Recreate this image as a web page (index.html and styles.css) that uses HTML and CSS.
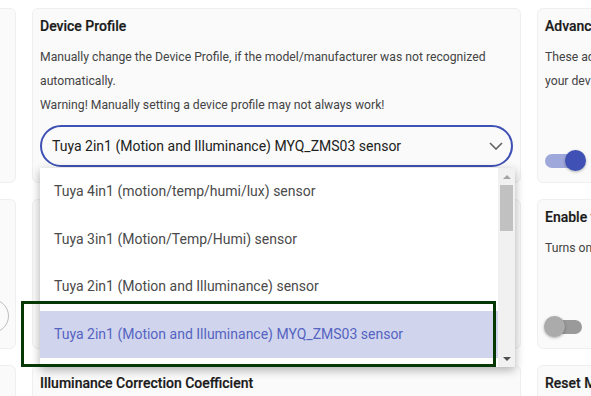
FILE: index.html
```html
<!DOCTYPE html>
<html lang="en">
<head>
  <meta charset="UTF-8">
  <title>Device Settings</title>
  <link rel="stylesheet" href="styles.css">
</head>
<body>

  <div class="grid">

    <div class="card">
      <h3 class="titulo">Device Information</h3>
      <p class="texto">Model and manufacturer reported by the device.</p>
    </div>

    <div class="card">
      <h3 class="titulo">Device Profile</h3>
      <p class="texto">Manually change the Device Profile, if the model/manufacturer was not recognized automatically.</p>
      <p class="texto">Warning! Manually setting a device profile may not always work!</p>

      <div class="selector">
        <div class="select">
          <span>Tuya 2in1 (Motion and Illuminance) MYQ_ZMS03 sensor</span>
          <svg class="chevron" width="14" height="8" viewBox="0 0 14 8">
            <path d="M1 1 L7 7 L13 1" fill="none" stroke="#616161" stroke-width="1.6"/>
          </svg>
        </div>

        <div class="lista">
          <div class="opciones">
            <div class="opcion">Tuya 4in1 (motion/temp/humi/lux) sensor</div>
            <div class="opcion">Tuya 3in1 (Motion/Temp/Humi) sensor</div>
            <div class="opcion">Tuya 2in1 (Motion and Illuminance) sensor</div>
            <div class="opcion activa">Tuya 2in1 (Motion and Illuminance) MYQ_ZMS03 sensor</div>
            <div class="opcion">Tuya Human Presence sensor ZG-204ZL</div>
          </div>
          <div class="scroll">
            <div class="flecha arriba"></div>
            <div class="pista"><div class="barra"></div></div>
            <div class="flecha abajo"></div>
          </div>
          <div class="marco"></div>
        </div>
      </div>
    </div>

    <div class="card">
      <h3 class="titulo">Advanced Options</h3>
      <p class="texto">These advanced options are intended for experienced users and may change how<br>your device behaves.</p>
      <div class="toggle on"><div class="pista-t"></div><div class="bola"></div></div>
    </div>

    <div class="card">
      <h3 class="titulo">Identify Device</h3>
      <p class="texto">Makes the device blink so it can be found.</p>
      <div class="fila-boton"><div class="circulo"></div></div>
    </div>

    <div class="card">
      <h3 class="titulo">Motion Sensitivity</h3>
      <p class="texto">Sensitivity of the motion detection.</p>
    </div>

    <div class="card">
      <h3 class="titulo">Enable temperature reports</h3>
      <p class="texto">Turns on periodic temperature reporting.</p>
      <div class="toggle"><div class="pista-t"></div><div class="bola"></div></div>
    </div>

    <div class="card">
      <h3 class="titulo">Keep Time</h3>
    </div>

    <div class="card">
      <h3 class="titulo">Illuminance Correction Coefficient</h3>
    </div>

    <div class="card">
      <h3 class="titulo">Reset Motion Status</h3>
    </div>

  </div>

</body>
</html>
```

FILE: styles.css
```css
html, body {
  margin: 0;
  padding: 0;
  background-color: #ffffff;
  overflow: hidden;
}

body {
  font-family: Roboto, 'Noto Sans', Arial, sans-serif;
  padding-top: 8px;
  height: 396px;
  box-sizing: border-box;
}

.grid {
  display: grid;
  grid-template-columns: repeat(3, 489px);
  grid-template-rows: 175px 150px 120px;
  gap: 16px;
  margin-left: -473px;
  width: 1499px;
}

.card {
  background-color: #fafafa;
  border: 1px solid #efefef;
  border-radius: 6px;
  padding: 7px 7px 11px 7px;
  display: flex;
  flex-direction: column;
}

.titulo {
  margin: 0;
  font-size: 14px;
  line-height: 20px;
  font-weight: 500;
  color: #1a1a1a;
  -webkit-text-stroke: 0.2px #1a1a1a;
}

.texto {
  margin: 0;
  font-size: 12.2px;
  line-height: 24px;
  color: #444444;
}

.titulo + .texto {
  margin-top: 9px;
}

/* selector de perfil */
.selector {
  position: relative;
  margin-top: 8px;
}

.select {
  height: 42px;
  box-sizing: border-box;
  border: 2px solid #3f51b5;
  border-radius: 21px;
  padding: 0 8px 0 10px;
  display: flex;
  align-items: center;
  justify-content: space-between;
  font-size: 14px;
  color: #212121;
}

.lista {
  position: absolute;
  top: 43px;
  left: 0;
  width: 475px;
  height: 199px;
  background-color: #ffffff;
  box-shadow: 0 3px 9px rgba(0, 0, 0, 0.3);
  display: flex;
  z-index: 10;
}

.opciones {
  flex: 1;
  overflow: hidden;
}

.opcion {
  height: 47.5px;
  line-height: 47.5px;
  padding-left: 14px;
  font-size: 14px;
  color: #4a4a4a;
  white-space: nowrap;
}

.opcion.activa {
  background-color: #d0d5ed;
  color: #5563c1;
}

.scroll {
  width: 17px;
  background-color: #f1f1f1;
  display: flex;
  flex-direction: column;
}

.flecha {
  height: 17px;
  display: flex;
  align-items: center;
  justify-content: center;
}

.flecha::before {
  content: "";
  border-left: 4px solid transparent;
  border-right: 4px solid transparent;
}

.arriba::before { border-bottom: 4px solid #a3a3a3; }
.abajo::before { border-top: 4px solid #505050; }

.pista {
  flex: 1;
  padding: 0 2px;
}

.barra {
  height: 46px;
  background-color: #c1c1c1;
}

.marco {
  position: absolute;
  left: -19px;
  top: 133px;
  width: 475px;
  height: 66px;
  box-sizing: border-box;
  border: 3px solid #053805;
}

/* interruptores */
.toggle {
  position: relative;
  width: 43px;
  height: 21px;
  margin-top: auto;
  margin-left: -1px;
}

.pista-t {
  position: absolute;
  left: 1px;
  top: 4px;
  width: 37px;
  height: 14px;
  border-radius: 7px;
  background-color: #9a9a9a;
}

.bola {
  position: absolute;
  left: 0;
  top: 0;
  width: 21px;
  height: 21px;
  border-radius: 50%;
  background-color: #ababab;
  box-shadow: 0 1px 3px rgba(0, 0, 0, 0.3);
}

.toggle.on .pista-t { background-color: #9fa8da; }
.toggle.on .bola {
  left: 21px;
  background-color: #3f51b5;
}

.fila-boton {
  margin-top: auto;
  margin-bottom: 4px;
  display: flex;
  justify-content: flex-end;
}

.circulo {
  width: 34px;
  height: 34px;
  box-sizing: border-box;
  border-radius: 50%;
  border: 1px solid #bdbdbd;
  margin-right: -1px;
}
```
